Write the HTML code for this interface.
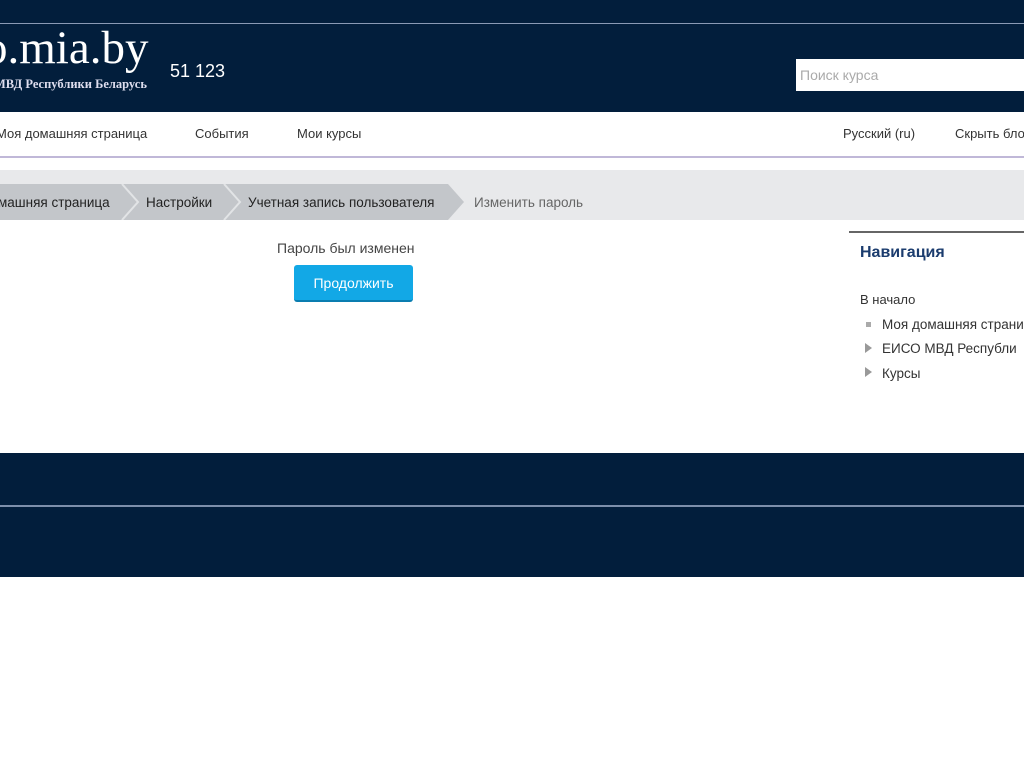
<!DOCTYPE html>
<html><head><meta charset="utf-8"><style>
body{margin:0;width:1024px;height:767px;overflow:hidden;background:#fff;font-family:"Liberation Sans",sans-serif;position:relative}
.a{position:absolute;white-space:nowrap}
</style></head><body>
<div class="a" style="left:0;top:0;width:1024px;height:112px;background:#021e3c"></div>
<div class="a" style="left:0;top:23px;width:1024px;height:1px;background:#8a9ab5"></div>
<div class="a" style="left:-16px;top:21px;font:47px 'Liberation Serif',serif;color:#fff">o.mia.by</div>
<div class="a" style="left:-6px;top:77px;font:bold 12.5px 'Liberation Serif',serif;color:#dde">МВД Республики Беларусь</div>
<div class="a" style="left:170px;top:61px;font:18px 'Liberation Sans',sans-serif;color:#fff">51 123</div>
<div class="a" style="left:796px;top:59px;width:228px;height:32px;background:#fff"></div>
<div class="a" style="left:800px;top:67px;font:14px 'Liberation Sans';color:#aaa">Поиск курса</div>
<div class="a" style="left:0;top:156px;width:1024px;height:2px;background:#c0b8d8"></div>
<div class="a" style="left:-4px;top:126px;font:13px 'Liberation Sans';color:#333">Моя домашняя страница</div>
<div class="a" style="left:195px;top:126px;font:13px 'Liberation Sans';color:#333">События</div>
<div class="a" style="left:297px;top:126px;font:13px 'Liberation Sans';color:#333">Мои курсы</div>
<div class="a" style="left:843px;top:126px;font:13px 'Liberation Sans';color:#333">Русский (ru)</div>
<div class="a" style="left:955px;top:126px;font:13px 'Liberation Sans';color:#333">Скрыть бло</div>
<div class="a" style="left:0;top:170px;width:1024px;height:50px;background:#e8e9eb"></div>
<svg class="a" style="left:0;top:184px" width="480" height="36">
<polygon points="0,0 448,0 464,18 448,36 0,36" fill="#c3c6ca"/>
<polyline points="122,0 138,18 122,36" fill="none" stroke="#e2e4e6" stroke-width="2"/>
<polyline points="224,0 240,18 224,36" fill="none" stroke="#e2e4e6" stroke-width="2"/>
</svg>
<div class="a" style="left:-2px;top:195px;font:13.5px 'Liberation Sans';color:#222">машняя страница</div>
<div class="a" style="left:146px;top:195px;font:13.5px 'Liberation Sans';color:#222">Настройки</div>
<div class="a" style="left:248px;top:195px;font:13.5px 'Liberation Sans';color:#222">Учетная запись пользователя</div>
<div class="a" style="left:474px;top:195px;font:13.5px 'Liberation Sans';color:#666">Изменить пароль</div>
<div class="a" style="left:277px;top:240px;font:14px 'Liberation Sans';color:#444">Пароль был изменен</div>
<div class="a" style="left:294px;top:265px;width:119px;height:37px;background:#12a8e6;border-radius:3px;border-bottom:2px solid #0a7db0;box-sizing:border-box;color:#fff;font:14px 'Liberation Sans';text-align:center;line-height:37px">Продолжить</div>
<div class="a" style="left:849px;top:231px;width:175px;height:2px;background:#666"></div>
<div class="a" style="left:860px;top:244px;font:bold 16px 'Liberation Sans';color:#1b3c6e">Навигация</div>
<div class="a" style="left:860px;top:292px;font:13px 'Liberation Sans';color:#333">В начало</div>
<div class="a" style="left:866px;top:322px;width:5px;height:5px;background:#aaa"></div>
<div class="a" style="left:882px;top:317px;font:13.5px 'Liberation Sans';color:#333">Моя домашняя страни</div>
<svg class="a" style="left:865px;top:343px" width="8" height="10"><polygon points="0,0 7,5 0,10" fill="#999"/></svg>
<div class="a" style="left:882px;top:341px;font:13.5px 'Liberation Sans';color:#333">ЕИСО МВД Республи</div>
<svg class="a" style="left:865px;top:367px" width="8" height="10"><polygon points="0,0 7,5 0,10" fill="#999"/></svg>
<div class="a" style="left:882px;top:366px;font:13.5px 'Liberation Sans';color:#333">Курсы</div>
<div class="a" style="left:0;top:453px;width:1024px;height:124px;background:#021e3c"></div>
<div class="a" style="left:0;top:505px;width:1024px;height:2px;background:#7d8fab"></div>
</body></html>
